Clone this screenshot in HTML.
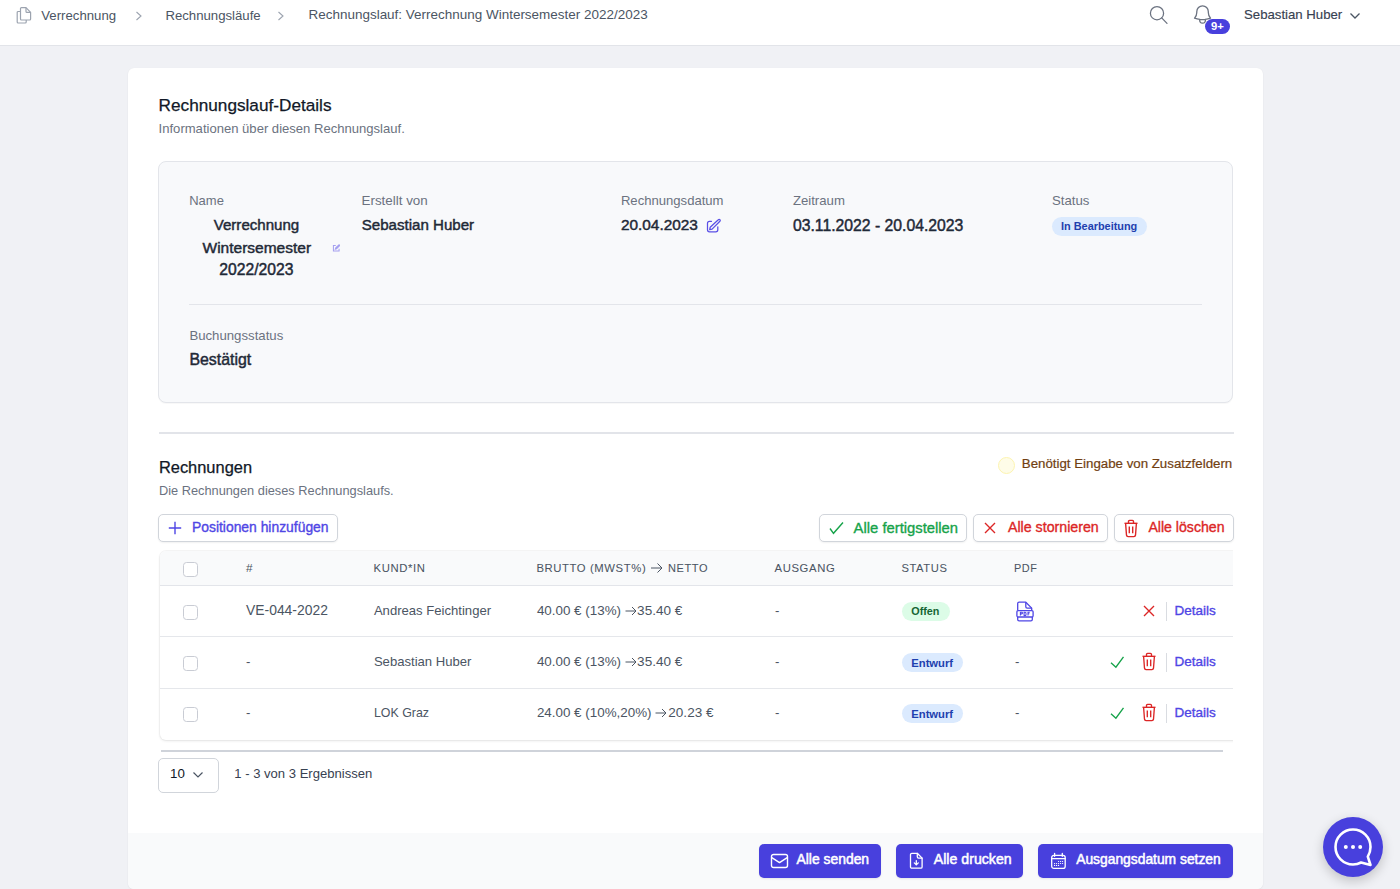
<!DOCTYPE html>
<html><head><meta charset="utf-8">
<style>
*{box-sizing:border-box;margin:0;padding:0}
html,body{width:1400px;height:889px;overflow:hidden}
body{background:#f0f1f5;font-family:"Liberation Sans",sans-serif;position:relative}
.t,.abs{position:absolute;white-space:nowrap}
</style></head><body>
<div class="abs" style="left:0;top:0;width:1400px;height:46px;background:#fff;border-bottom:1px solid #e2e4e9"></div>
<svg class="abs" style="left:16px;top:7px" width="16" height="17" viewBox="0 0 16 17" fill="none" stroke="#9ca3af" stroke-width="1.2" stroke-linejoin="round">
<path d="M4.5 4.5H2.2C1.6 4.5 1.2 4.9 1.2 5.5V15C1.2 15.6 1.6 16 2.2 16H9.2C9.8 16 10.2 15.6 10.2 15V13"/>
<path d="M4.5 1.6C4.5 1.1 4.9 0.7 5.4 0.7H10L14.6 5.3V12C14.6 12.5 14.2 13 13.7 13H5.4C4.9 13 4.5 12.5 4.5 12Z"/>
<path d="M10 0.7V4.4C10 4.9 10.4 5.3 10.9 5.3H14.6"/></svg>
<div class="t" style="left:41.3px;top:7.53px;font-size:13.2px;line-height:16px;color:#4b5563;">Verrechnung</div>
<svg class="abs" style="left:135px;top:11px" width="8" height="10" viewBox="0 0 8 10"><path d="M1.5 1L6 5L1.5 9" fill="none" stroke="#9ca3af" stroke-width="1.1"/></svg>
<div class="t" style="left:165.4px;top:7.53px;font-size:13.2px;line-height:16px;color:#4b5563;">Rechnungsläufe</div>
<svg class="abs" style="left:277px;top:11px" width="8" height="10" viewBox="0 0 8 10"><path d="M1.5 1L6 5L1.5 9" fill="none" stroke="#9ca3af" stroke-width="1.1"/></svg>
<div class="t" style="left:308.5px;top:7.43px;font-size:13.47px;line-height:16px;color:#4b5563;">Rechnungslauf: Verrechnung Wintersemester 2022/2023</div>
<svg class="abs" style="left:1147px;top:4px" width="24" height="22" viewBox="0 0 24 22" fill="none" stroke="#6b7280" stroke-width="1.25" stroke-linecap="round">
<circle cx="10" cy="9.2" r="6.6"/><path d="M14.7 13.9L20 19.4"/></svg>
<svg class="abs" style="left:1191.4px;top:2.8px" width="23.1" height="23.1" viewBox="0 0 24 24" fill="none" stroke="#6b7280" stroke-width="1.35" stroke-linecap="round" stroke-linejoin="round"><path d="M14.857 17.082a23.848 23.848 0 005.454-1.31A8.967 8.967 0 0118 9.75v-.7V9A6 6 0 006 9v.75a8.967 8.967 0 01-2.312 6.022c1.733.64 3.56 1.085 5.455 1.31m5.714 0a24.255 24.255 0 01-5.714 0m5.714 0a3 3 0 11-5.714 0"/></svg>
<div class="abs" style="left:1205px;top:18.5px;width:25px;height:15px;border-radius:8px;background:#4840dd"></div>
<div class="t" style="left:1205.0px;top:18.68px;font-size:11.3px;line-height:14px;color:#fff;font-weight:bold;width:25px;text-align:center;">9+</div>
<div class="t" style="left:1244px;top:6.93px;font-size:13.2px;line-height:16px;color:#374151;-webkit-text-stroke:0.15px #374151;">Sebastian Huber</div>
<svg class="abs" style="left:1349px;top:12px" width="12" height="8" viewBox="0 0 12 8"><path d="M1.5 1.5L6 6L10.5 1.5" fill="none" stroke="#4b5563" stroke-width="1.3"/></svg>
<div class="abs" style="left:128px;top:68px;width:1135px;height:821px;background:#fff;border-radius:6px;box-shadow:0 0 1px rgba(0,0,0,.06),0 1px 2px rgba(0,0,0,.05)"></div>
<div class="t" style="left:158.6px;top:95.24px;font-size:17.2px;line-height:21px;color:#111827;-webkit-text-stroke:0.25px #111827;">Rechnungslauf-Details</div>
<div class="t" style="left:158.6px;top:121.07px;font-size:13.07px;line-height:16px;color:#6b7280;">Informationen über diesen Rechnungslauf.</div>
<div class="abs" style="left:158px;top:161px;width:1075px;height:242px;background:#f8f9fb;border:1px solid #e3e5ea;border-radius:8px;box-shadow:0 1px 1px rgba(0,0,0,.03)"></div>
<div class="t" style="left:189.2px;top:192.90px;font-size:13.0px;line-height:16px;color:#6b7280;">Name</div>
<div class="t" style="left:156.5px;top:215.77px;font-size:15.08px;line-height:18px;color:#1f2937;-webkit-text-stroke:0.45px #1f2937;width:200px;text-align:center;">Verrechnung</div>
<div class="t" style="left:156.8px;top:237.63px;font-size:15.5px;line-height:19px;color:#1f2937;-webkit-text-stroke:0.45px #1f2937;width:200px;text-align:center;">Wintersemester</div>
<div class="t" style="left:156.39999999999998px;top:259.96px;font-size:15.7px;line-height:19px;color:#1f2937;-webkit-text-stroke:0.45px #1f2937;width:200px;text-align:center;">2022/2023</div>
<svg class="abs" style="left:331.5px;top:243.5px" width="8.5" height="8.5" viewBox="0 0 9 9" fill="none" stroke="#a5a0f0" stroke-width="1.1"><path d="M4 1.5H1.5V7.5H7.5V5"/><path d="M3.5 5.5L4 4L7.5 0.8L8.2 1.5L4.8 5Z"/></svg>
<div class="t" style="left:361.5px;top:192.76px;font-size:13.4px;line-height:16px;color:#6b7280;">Erstellt von</div>
<div class="t" style="left:361.7px;top:215.77px;font-size:15.1px;line-height:18px;color:#1f2937;-webkit-text-stroke:0.45px #1f2937;">Sebastian Huber</div>
<div class="t" style="left:620.9px;top:192.86px;font-size:13.1px;line-height:16px;color:#6b7280;">Rechnungsdatum</div>
<div class="t" style="left:620.9px;top:216.16px;font-size:15.4px;line-height:18px;color:#1f2937;-webkit-text-stroke:0.45px #1f2937;">20.04.2023</div>
<svg class="abs" style="left:706px;top:217.5px" width="15" height="15" viewBox="0 0 15 15" fill="none" stroke="#5b50e6" stroke-width="1.25" stroke-linecap="round" stroke-linejoin="round"><path d="M5.5 3.3H3.5C2.4 3.3 1.5 4.2 1.5 5.3V11.8C1.5 12.9 2.4 13.8 3.5 13.8H9.8C10.9 13.8 11.8 12.9 11.8 11.8V8.8"/><path d="M12.3 1.7C12.8 1.2 13.5 1.2 13.9 1.7S14.4 2.8 13.9 3.3L6.1 11.1L3.7 11.6L4.2 9.2Z"/></svg>
<div class="t" style="left:792.9px;top:192.83px;font-size:13.2px;line-height:16px;color:#6b7280;">Zeitraum</div>
<div class="t" style="left:792.9px;top:215.54px;font-size:15.75px;line-height:19px;color:#1f2937;-webkit-text-stroke:0.45px #1f2937;">03.11.2022 - 20.04.2023</div>
<div class="t" style="left:1052px;top:192.83px;font-size:13.2px;line-height:16px;color:#6b7280;">Status</div>
<div class="abs" style="left:1052px;top:217px;width:95px;height:19px;border-radius:10px;background:#dbeafe"></div>
<div class="t" style="left:1061px;top:220.12px;font-size:10.9px;line-height:13px;color:#1e40af;font-weight:bold;">In Bearbeitung</div>
<div class="abs" style="left:189px;top:304px;width:1013px;height:1px;background:#e3e5ea"></div>
<div class="t" style="left:189.4px;top:327.53px;font-size:13.2px;line-height:16px;color:#6b7280;">Buchungsstatus</div>
<div class="t" style="left:189.4px;top:349.99px;font-size:15.9px;line-height:19px;color:#1f2937;-webkit-text-stroke:0.45px #1f2937;">Bestätigt</div>
<div class="abs" style="left:158.5px;top:432px;width:1075px;height:1.5px;background:#e2e4e9"></div>
<div class="t" style="left:158.9px;top:457.01px;font-size:16.43px;line-height:20px;color:#111827;-webkit-text-stroke:0.25px #111827;">Rechnungen</div>
<div class="t" style="left:158.9px;top:483.16px;font-size:12.8px;line-height:15px;color:#6b7280;">Die Rechnungen dieses Rechnungslaufs.</div>
<div class="abs" style="left:998px;top:456.5px;width:17px;height:17px;border-radius:50%;background:#fefce8;border:1px solid #fdf4b0"></div>
<div class="t" style="left:1021.8px;top:456.15px;font-size:13.29px;line-height:16px;color:#713f12;-webkit-text-stroke:0.2px #713f12;">Benötigt Eingabe von Zusatzfeldern</div>
<div class="abs" style="left:158px;top:514px;width:180px;height:28px;border:1px solid #d1d5db;border-radius:5px;background:#fff;box-shadow:0 1px 2px rgba(0,0,0,.06)"></div>
<svg class="abs" style="left:168px;top:521px" width="14" height="14" viewBox="0 0 14 14"><path d="M7 0.8V13.2M0.8 7H13.2" stroke="#4f46e5" stroke-width="1.4" fill="none"/></svg>
<div class="t" style="left:192px;top:519.39px;font-size:13.88px;line-height:17px;color:#4f46e5;-webkit-text-stroke:0.35px #4f46e5;">Positionen hinzufügen</div>
<div class="abs" style="left:819px;top:514px;width:148px;height:28px;border:1px solid #d1d5db;border-radius:5px;background:#fff;box-shadow:0 1px 2px rgba(0,0,0,.06)"></div>
<svg class="abs" style="left:829px;top:521px" width="15" height="14" viewBox="0 0 15 14"><path d="M1 7.5L4.5 12.3L14 1.5" stroke="#16a34a" stroke-width="1.4" fill="none"/></svg>
<div class="t" style="left:853.6px;top:518.57px;font-size:14.8px;line-height:18px;color:#16a34a;-webkit-text-stroke:0.35px #16a34a;">Alle fertigstellen</div>
<div class="abs" style="left:973px;top:514px;width:135px;height:28px;border:1px solid #d1d5db;border-radius:5px;background:#fff;box-shadow:0 1px 2px rgba(0,0,0,.06)"></div>
<svg class="abs" style="left:984px;top:522px" width="12" height="12" viewBox="0 0 12 12"><path d="M1 1L11 11M11 1L1 11" stroke="#dc2626" stroke-width="1.4" fill="none"/></svg>
<div class="t" style="left:1008px;top:519.28px;font-size:14.2px;line-height:17px;color:#dc2626;-webkit-text-stroke:0.35px #dc2626;">Alle stornieren</div>
<div class="abs" style="left:1114px;top:514px;width:120px;height:28px;border:1px solid #d1d5db;border-radius:5px;background:#fff;box-shadow:0 1px 2px rgba(0,0,0,.06)"></div>
<svg class="abs" style="left:1123px;top:519px" width="16" height="19" viewBox="0 0 16 19" fill="none" stroke="#dc2626" stroke-width="1.4" stroke-linejoin="round"><path d="M1.5 4.3H14.5"/><path d="M5.5 4.3V2.6C5.5 2 6 1.4 6.6 1.4H9.4C10 1.4 10.5 2 10.5 2.6V4.3"/><path d="M2.6 4.3L3.5 16.2C3.6 17 4.2 17.6 5 17.6H11C11.8 17.6 12.4 17 12.5 16.2L13.4 4.3"/><path d="M6.3 7.5V14.3M9.7 7.5V14.3"/></svg>
<div class="t" style="left:1148.4px;top:519.30px;font-size:14.13px;line-height:17px;color:#dc2626;-webkit-text-stroke:0.35px #dc2626;">Alle löschen</div>
<div class="abs" style="left:160px;top:551px;width:1080px;height:189px;background:#fff;border-radius:6px;box-shadow:0 0 0 1px rgba(0,0,0,.03),0 1px 3px rgba(0,0,0,.09);clip-path:inset(-8px 7px -8px -8px)"></div>
<div class="abs" style="left:160px;top:551px;width:1080px;height:35px;background:#f9fafb;border-radius:6px 6px 0 0;border-bottom:1px solid #e3e5ea;clip-path:inset(0 7px 0 0)"></div>
<div class="abs" style="left:160px;top:636px;width:1073px;height:1px;background:#e5e7eb"></div>
<div class="abs" style="left:160px;top:688px;width:1073px;height:1px;background:#e5e7eb"></div>
<div class="abs" style="left:183px;top:562px;width:15px;height:15px;border:1px solid #c9ccd4;border-radius:3.5px;background:#fff"></div>
<div class="t" style="left:246px;top:561.31px;font-size:11.8px;line-height:14px;color:#4b5563;letter-spacing:0.3px;">#</div>
<div class="t" style="left:373.6px;top:561.48px;font-size:11.3px;line-height:14px;color:#4b5563;-webkit-text-stroke:0.05px #4b5563;letter-spacing:0.6px;">KUND*IN</div>
<div class="t" style="left:536.4px;top:561.48px;font-size:11.3px;line-height:14px;color:#4b5563;-webkit-text-stroke:0.05px #4b5563;letter-spacing:0.6px;">BRUTTO (MWST%)</div>
<svg class="abs" style="left:650px;top:562px" width="13" height="12" viewBox="0 0 13 12" fill="none" stroke="#4b5563" stroke-width="1.0"><path d="M1 6H12M7.5 1.5L12 6L7.5 10.5"/></svg>
<div class="t" style="left:668px;top:562.09px;font-size:11.0px;line-height:13px;color:#4b5563;-webkit-text-stroke:0.05px #4b5563;letter-spacing:0.6px;">NETTO</div>
<div class="t" style="left:774.6px;top:561.48px;font-size:11.3px;line-height:14px;color:#4b5563;-webkit-text-stroke:0.05px #4b5563;letter-spacing:0.6px;">AUSGANG</div>
<div class="t" style="left:901.4px;top:562.02px;font-size:11.2px;line-height:13px;color:#4b5563;-webkit-text-stroke:0.05px #4b5563;letter-spacing:0.6px;">STATUS</div>
<div class="t" style="left:1014px;top:562.12px;font-size:10.9px;line-height:13px;color:#4b5563;-webkit-text-stroke:0.05px #4b5563;letter-spacing:0.6px;">PDF</div>
<div class="abs" style="left:183px;top:605px;width:15px;height:15px;border:1px solid #c9ccd4;border-radius:3.5px;background:#fff"></div>
<div class="t" style="left:246px;top:601.88px;font-size:13.9px;line-height:17px;color:#4b5563;">VE-044-2022</div>
<div class="t" style="left:373.9px;top:602.66px;font-size:13.1px;line-height:16px;color:#4b5563;">Andreas Feichtinger</div>
<div class="t" style="left:536.9px;top:602.56px;font-size:13.4px;line-height:16px;color:#4b5563;">40.00 € (13%)</div>
<svg class="abs" style="left:624.5px;top:606.0px" width="12" height="10" viewBox="0 0 12 10" fill="none" stroke="#4b5563" stroke-width="1.0"><path d="M0.5 5H11M7 1L11 5L7 9"/></svg>
<div class="t" style="left:637.1px;top:602.50px;font-size:13.55px;line-height:16px;color:#4b5563;">35.40 €</div>
<div class="t" style="left:775px;top:602.63px;font-size:13.2px;line-height:16px;color:#4b5563;">-</div>
<div class="abs" style="left:902px;top:601.8000000000001px;width:48px;height:19px;border-radius:10px;background:#dcfce7"></div>
<div class="t" style="left:911.25px;top:604.96px;font-size:10.8px;line-height:13px;color:#166534;font-weight:bold;">Offen</div>
<svg class="abs" style="left:1016px;top:601px" width="18" height="21" viewBox="0 0 18 21" fill="none" stroke="#4f46e5" stroke-width="1.3" stroke-linejoin="round"><path d="M1.7 9.5V2.6C1.7 1.8 2.3 1.2 3.1 1.2H9.8L15.7 7.1V9.5"/><path d="M9.8 1.2V5.7C9.8 6.5 10.4 7.1 11.2 7.1H15.7"/><rect x="0.9" y="9.6" width="16.2" height="6.4" rx="1.2"/><path d="M1.7 16V18.4C1.7 19.2 2.3 19.8 3.1 19.8H14.9C15.7 19.8 16.3 19.2 16.3 18.4V16"/><path d="M4.4 14.6V11.2H5.8C6.7 11.2 6.7 12.9 5.8 12.9H4.4M8.1 14.6V11.2H9.1C10.4 11.2 10.4 14.6 9.1 14.6ZM12 14.6V11.2H13.8M12 12.8H13.4" stroke-width="1.1"/></svg>
<svg class="abs" style="left:1143px;top:604.5px" width="12" height="12" viewBox="0 0 12 12"><path d="M1 1L11 11M11 1L1 11" stroke="#dc2626" stroke-width="1.35" fill="none"/></svg>
<div class="abs" style="left:1166px;top:601.7px;width:1px;height:19px;background:#d9dce1"></div>
<div class="t" style="left:1174.6px;top:602.52px;font-size:13.5px;line-height:16px;color:#4f46e5;-webkit-text-stroke:0.35px #4f46e5;">Details</div>
<div class="abs" style="left:183px;top:656px;width:15px;height:15px;border:1px solid #c9ccd4;border-radius:3.5px;background:#fff"></div>
<div class="t" style="left:246px;top:653.83px;font-size:13.2px;line-height:16px;color:#4b5563;">-</div>
<div class="t" style="left:373.9px;top:653.86px;font-size:13.1px;line-height:16px;color:#4b5563;">Sebastian Huber</div>
<div class="t" style="left:536.9px;top:653.76px;font-size:13.4px;line-height:16px;color:#4b5563;">40.00 € (13%)</div>
<svg class="abs" style="left:624.5px;top:657.1999999999999px" width="12" height="10" viewBox="0 0 12 10" fill="none" stroke="#4b5563" stroke-width="1.0"><path d="M0.5 5H11M7 1L11 5L7 9"/></svg>
<div class="t" style="left:637.1px;top:653.70px;font-size:13.55px;line-height:16px;color:#4b5563;">35.40 €</div>
<div class="t" style="left:775px;top:653.83px;font-size:13.2px;line-height:16px;color:#4b5563;">-</div>
<div class="abs" style="left:902px;top:653.0px;width:61px;height:19px;border-radius:10px;background:#dbeafe"></div>
<div class="t" style="left:911.25px;top:655.50px;font-size:11.26px;line-height:14px;color:#1e40af;font-weight:bold;">Entwurf</div>
<div class="t" style="left:1015px;top:653.83px;font-size:13.2px;line-height:16px;color:#4b5563;">-</div>
<svg class="abs" style="left:1110px;top:655.9px" width="15" height="13" viewBox="0 0 15 13"><path d="M1 6.8L5.9 11.2L13.5 0.8" stroke="#16a34a" stroke-width="1.35" fill="none"/></svg>
<svg class="abs" style="left:1141px;top:652.4px" width="16" height="19" viewBox="0 0 16 19" fill="none" stroke="#dc2626" stroke-width="1.35" stroke-linejoin="round"><path d="M1.5 4.3H14.5"/><path d="M5.5 4.3V2.6C5.5 2 6 1.4 6.6 1.4H9.4C10 1.4 10.5 2 10.5 2.6V4.3"/><path d="M2.6 4.3L3.5 16.2C3.6 17 4.2 17.6 5 17.6H11C11.8 17.6 12.4 17 12.5 16.2L13.4 4.3"/><path d="M6.3 7.5V14.3M9.7 7.5V14.3"/></svg>
<div class="abs" style="left:1166px;top:652.9px;width:1px;height:19px;background:#d9dce1"></div>
<div class="t" style="left:1174.6px;top:653.72px;font-size:13.5px;line-height:16px;color:#4f46e5;-webkit-text-stroke:0.35px #4f46e5;">Details</div>
<div class="abs" style="left:183px;top:707px;width:15px;height:15px;border:1px solid #c9ccd4;border-radius:3.5px;background:#fff"></div>
<div class="t" style="left:246px;top:704.83px;font-size:13.2px;line-height:16px;color:#4b5563;">-</div>
<div class="t" style="left:373.9px;top:705.60px;font-size:12.4px;line-height:15px;color:#4b5563;">LOK Graz</div>
<div class="t" style="left:536.9px;top:704.76px;font-size:13.4px;line-height:16px;color:#4b5563;">24.00 € (10%,20%)</div>
<svg class="abs" style="left:655.4px;top:708.1999999999999px" width="12" height="10" viewBox="0 0 12 10" fill="none" stroke="#4b5563" stroke-width="1.0"><path d="M0.5 5H11M7 1L11 5L7 9"/></svg>
<div class="t" style="left:668.3px;top:704.70px;font-size:13.55px;line-height:16px;color:#4b5563;">20.23 €</div>
<div class="t" style="left:775px;top:704.83px;font-size:13.2px;line-height:16px;color:#4b5563;">-</div>
<div class="abs" style="left:902px;top:704.0px;width:61px;height:19px;border-radius:10px;background:#dbeafe"></div>
<div class="t" style="left:911.25px;top:706.50px;font-size:11.26px;line-height:14px;color:#1e40af;font-weight:bold;">Entwurf</div>
<div class="t" style="left:1015px;top:704.83px;font-size:13.2px;line-height:16px;color:#4b5563;">-</div>
<svg class="abs" style="left:1110px;top:706.9px" width="15" height="13" viewBox="0 0 15 13"><path d="M1 6.8L5.9 11.2L13.5 0.8" stroke="#16a34a" stroke-width="1.35" fill="none"/></svg>
<svg class="abs" style="left:1141px;top:703.4px" width="16" height="19" viewBox="0 0 16 19" fill="none" stroke="#dc2626" stroke-width="1.35" stroke-linejoin="round"><path d="M1.5 4.3H14.5"/><path d="M5.5 4.3V2.6C5.5 2 6 1.4 6.6 1.4H9.4C10 1.4 10.5 2 10.5 2.6V4.3"/><path d="M2.6 4.3L3.5 16.2C3.6 17 4.2 17.6 5 17.6H11C11.8 17.6 12.4 17 12.5 16.2L13.4 4.3"/><path d="M6.3 7.5V14.3M9.7 7.5V14.3"/></svg>
<div class="abs" style="left:1166px;top:703.9px;width:1px;height:19px;background:#d9dce1"></div>
<div class="t" style="left:1174.6px;top:704.72px;font-size:13.5px;line-height:16px;color:#4f46e5;-webkit-text-stroke:0.35px #4f46e5;">Details</div>
<div class="abs" style="left:161px;top:750px;width:1062px;height:2px;background:#cfd3da"></div>
<div class="abs" style="left:158px;top:758px;width:61px;height:35px;border:1px solid #d1d5db;border-radius:5px;background:#fff"></div>
<div class="t" style="left:170px;top:766.14px;font-size:13.3px;line-height:16px;color:#111827;">10</div>
<svg class="abs" style="left:192px;top:771px" width="12" height="8" viewBox="0 0 12 8"><path d="M1.5 1.5L6 6L10.5 1.5" fill="none" stroke="#4b5563" stroke-width="1.2"/></svg>
<div class="t" style="left:234.3px;top:766.22px;font-size:13.07px;line-height:16px;color:#374151;">1 - 3 von 3 Ergebnissen</div>
<div class="abs" style="left:128px;top:833px;width:1135px;height:56px;background:#f9fafb;border-radius:0 0 6px 6px"></div>
<div class="abs" style="left:759px;top:844px;width:122px;height:34px;border-radius:5px;background:#4840dd;box-shadow:0 1px 2px rgba(0,0,0,.08)"></div>
<svg class="abs" style="left:770px;top:853px" width="19" height="16" viewBox="0 0 19 16" fill="none" stroke="#fff" stroke-width="1.4" stroke-linejoin="round"><rect x="1.5" y="1.5" width="16" height="13" rx="2"/><path d="M1.8 4.6L9.5 9.6L17.2 4.6"/></svg>
<div class="t" style="left:796.5px;top:851.18px;font-size:13.9px;line-height:17px;color:#fff;-webkit-text-stroke:0.5px #fff;">Alle senden</div>
<div class="abs" style="left:896px;top:844px;width:127px;height:34px;border-radius:5px;background:#4840dd;box-shadow:0 1px 2px rgba(0,0,0,.08)"></div>
<svg class="abs" style="left:909.3px;top:852.3px" width="14.5" height="17.5" viewBox="0 0 14.5 17.5" fill="none" stroke="#fff" stroke-width="1.3" stroke-linejoin="round" stroke-linecap="round"><path d="M1.5 2.6C1.5 1.9 2.1 1.3 2.8 1.3H8.3L13.1 6.1V14.9C13.1 15.6 12.5 16.2 11.8 16.2H2.8C2.1 16.2 1.5 15.6 1.5 14.9Z"/><path d="M8.3 1.3V4.8C8.3 5.5 8.9 6.1 9.6 6.1H13.1"/><path d="M7.3 8.6V12.9M5.3 10.9L7.3 12.9L9.3 10.9"/></svg>
<div class="t" style="left:933.8px;top:851.10px;font-size:14.15px;line-height:17px;color:#fff;-webkit-text-stroke:0.5px #fff;">Alle drucken</div>
<div class="abs" style="left:1038px;top:844px;width:195px;height:34px;border-radius:5px;background:#4840dd;box-shadow:0 1px 2px rgba(0,0,0,.08)"></div>
<svg class="abs" style="left:1050px;top:852px" width="17" height="18" viewBox="0 0 17 18" fill="none" stroke="#fff" stroke-width="1.3" stroke-linejoin="round" stroke-linecap="round"><path d="M4.6 1.3V4.3M12.3 1.3V4.3"/><rect x="1.7" y="3.4" width="13.5" height="13" rx="2.2"/><path d="M1.7 6.6H15.2"/><path d="M8.5 9.5H8.6M10.5 9.5H10.6M12.5 9.5H12.6M4.5 11.5H4.6M6.5 11.5H6.6M8.5 11.5H8.6M10.5 11.5H10.6M12.5 11.5H12.6M4.5 13.4H4.6M6.5 13.4H6.6M8.5 13.4H8.6" stroke-width="1.2"/></svg>
<div class="t" style="left:1076.2px;top:851.20px;font-size:13.84px;line-height:17px;color:#fff;-webkit-text-stroke:0.5px #fff;">Ausgangsdatum setzen</div>
<div class="abs" style="left:1323px;top:817px;width:60px;height:60px;border-radius:50%;background:#4840dd;box-shadow:0 4px 12px rgba(0,0,0,.2)"></div>
<svg class="abs" style="left:1333px;top:827px" width="40" height="40" viewBox="0 0 40 40" fill="none" stroke="#fff" stroke-width="2.6" stroke-linejoin="round"><path d="M20 2.5C10.3 2.5 2.5 10.3 2.5 20S10.3 37.5 20 37.5C23 37.5 25.7 36.8 28.1 35.5L37.5 38L34.8 29.6C36.5 26.8 37.5 23.5 37.5 20C37.5 10.3 29.7 2.5 20 2.5Z"/><circle cx="12.8" cy="20" r="2" fill="#fff" stroke="none"/><circle cx="20" cy="20" r="2" fill="#fff" stroke="none"/><circle cx="27.2" cy="20" r="2" fill="#fff" stroke="none"/></svg>
</body></html>
